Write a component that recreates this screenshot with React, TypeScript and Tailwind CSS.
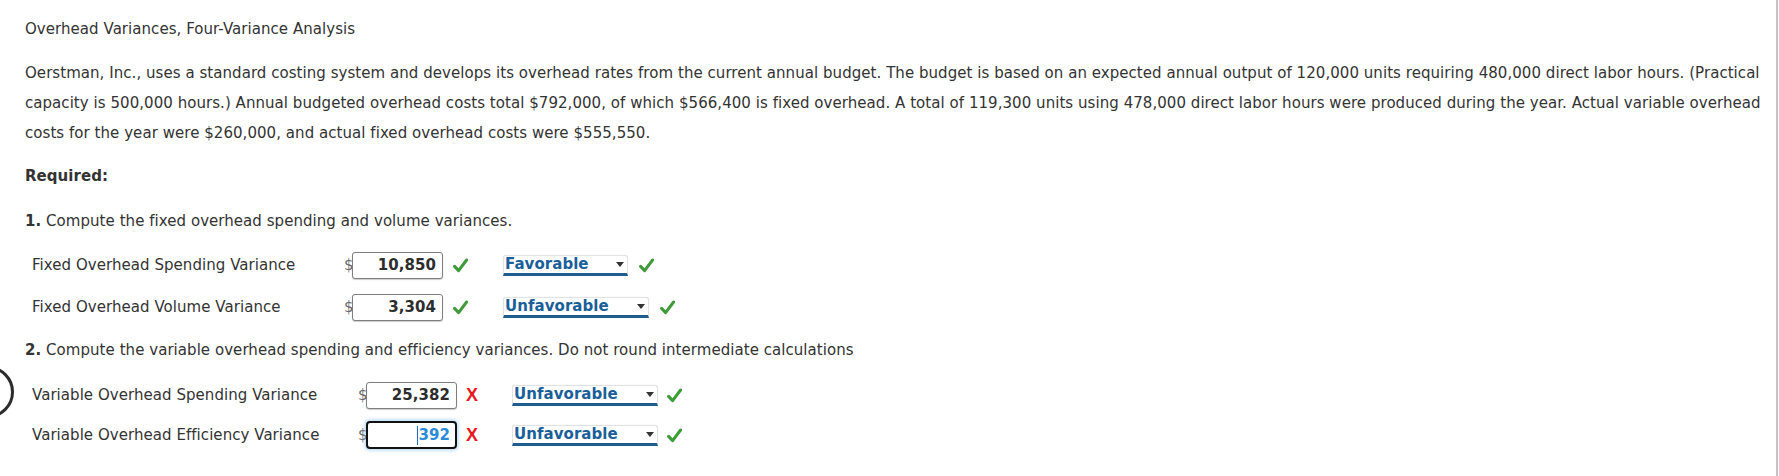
import React from "react";

function Check() {
  return (
    <svg width="15" height="15" viewBox="0 0 15 15" className="shrink-0">
      <path d="M1.6 8.4 L5.6 12.6 L13.6 2.0" fill="none" stroke="#3f9b3a" strokeWidth="3" strokeLinecap="round" strokeLinejoin="round" />
    </svg>
  );
}

function Cross() {
  return (
    <span className="shrink-0 w-[13px] text-[18px] font-bold leading-none text-[#e8161e] font-['Liberation_Sans',sans-serif]">X</span>
  );
}

function Select({ value, width }: { value: string; width: string }) {
  return (
    <div
      className={`${width} h-[21px] flex items-center justify-between bg-white border border-[#e2e2e2] border-b-[3px] border-b-[#1f5e8f] rounded-t-[3px] shadow-[0_0_1px_rgba(0,0,0,0.15)] font-bold text-[#1b5f99] leading-none`}
    >
      <span className="pl-[1px]">{value}</span>
      <svg width="8" height="5" viewBox="0 0 8 5" className="mr-[3px]">
        <path d="M0 0 L8 0 L4 5 Z" fill="#333" />
      </svg>
    </div>
  );
}

function NumBox({ value, focused }: { value: string; focused?: boolean }) {
  if (focused) {
    return (
      <div className="w-[91px] h-[28px] rounded-[4px] border-2 border-[#111] bg-white shadow-[0_0_3px_2px_rgba(130,190,240,0.45)] flex items-center justify-end pr-[5px] font-bold text-[#2a8bd8]">
        <span className="w-px h-[19px] bg-[#1e6fc0] mr-[1px]" />
        {value}
      </div>
    );
  }
  return (
    <div className="w-[91px] h-[27px] rounded-[3px] border border-[#7e7e7e] bg-white shadow-[0_1px_1px_rgba(0,0,0,0.2)] flex items-center justify-end pr-[6px] font-bold text-[#2d2d2d]">
      {value}
    </div>
  );
}

export default function App() {
  return (
    <div className="relative w-[1779px] h-[476px] overflow-hidden bg-white text-[#333] text-[15px] leading-[30px] tracking-[0.05px] font-['DejaVu_Sans','Verdana',sans-serif]">
      <div className="absolute right-0 top-0 w-[3px] h-full border-l-2 border-[#c4c4c4] bg-white" />
      <div className="absolute left-[-38px] top-[366px] w-[52px] h-[52px] rounded-full border-[3px] border-[#2b2b2b]" />

      <div className="pl-[25px] pt-[14px]">
        <div>Overhead Variances, Four-Variance Analysis</div>

        <p className="mt-[14px] whitespace-nowrap">
          Oerstman, Inc., uses a standard costing system and develops its overhead rates from the current annual budget. The budget is based on an expected annual output of 120,000 units requiring 480,000 direct labor hours. (Practical
          <br />
          capacity is 500,000 hours.) Annual budgeted overhead costs total $792,000, of which $566,400 is fixed overhead. A total of 119,300 units using 478,000 direct labor hours were produced during the year. Actual variable overhead
          <br />
          costs for the year were $260,000, and actual fixed overhead costs were $555,550.
        </p>

        <div className="mt-[13px] font-bold">Required:</div>

        <div className="mt-[15px]">
          <span className="font-bold">1.</span> Compute the fixed overhead spending and volume variances.
        </div>

        <div className="mt-[15px] flex flex-col gap-[14px]">
          <div className="flex items-center h-[28px]">
            <div className="w-[319px] pl-[7px]">Fixed Overhead Spending Variance</div>
            <span className="w-[8px] text-[#6b6b6b]">$</span>
            <NumBox value="10,850" />
            <div className="ml-[10px]"><Check /></div>
            <div className="ml-[35px]"><Select value="Favorable" width="w-[125px]" /></div>
            <div className="ml-[11px]"><Check /></div>
          </div>
          <div className="flex items-center h-[28px]">
            <div className="w-[319px] pl-[7px]">Fixed Overhead Volume Variance</div>
            <span className="w-[8px] text-[#6b6b6b]">$</span>
            <NumBox value="3,304" />
            <div className="ml-[10px]"><Check /></div>
            <div className="ml-[35px]"><Select value="Unfavorable" width="w-[146px]" /></div>
            <div className="ml-[11px]"><Check /></div>
          </div>
        </div>

        <div className="mt-[14px]">
          <span className="font-bold">2.</span> Compute the variable overhead spending and efficiency variances. Do not round intermediate calculations
        </div>

        <div className="mt-[16px] flex flex-col gap-[12px]">
          <div className="flex items-center h-[28px]">
            <div className="w-[333px] pl-[7px]">Variable Overhead Spending Variance</div>
            <span className="w-[8px] text-[#6b6b6b]">$</span>
            <NumBox value="25,382" />
            <div className="ml-[9px] flex items-center"><Cross /></div>
            <div className="ml-[33px]"><Select value="Unfavorable" width="w-[146px]" /></div>
            <div className="ml-[9px]"><Check /></div>
          </div>
          <div className="flex items-center h-[28px]">
            <div className="w-[333px] pl-[7px]">Variable Overhead Efficiency Variance</div>
            <span className="w-[8px] text-[#6b6b6b]">$</span>
            <NumBox value="392" focused />
            <div className="ml-[9px] flex items-center"><Cross /></div>
            <div className="ml-[33px]"><Select value="Unfavorable" width="w-[146px]" /></div>
            <div className="ml-[9px]"><Check /></div>
          </div>
        </div>
      </div>
    </div>
  );
}
